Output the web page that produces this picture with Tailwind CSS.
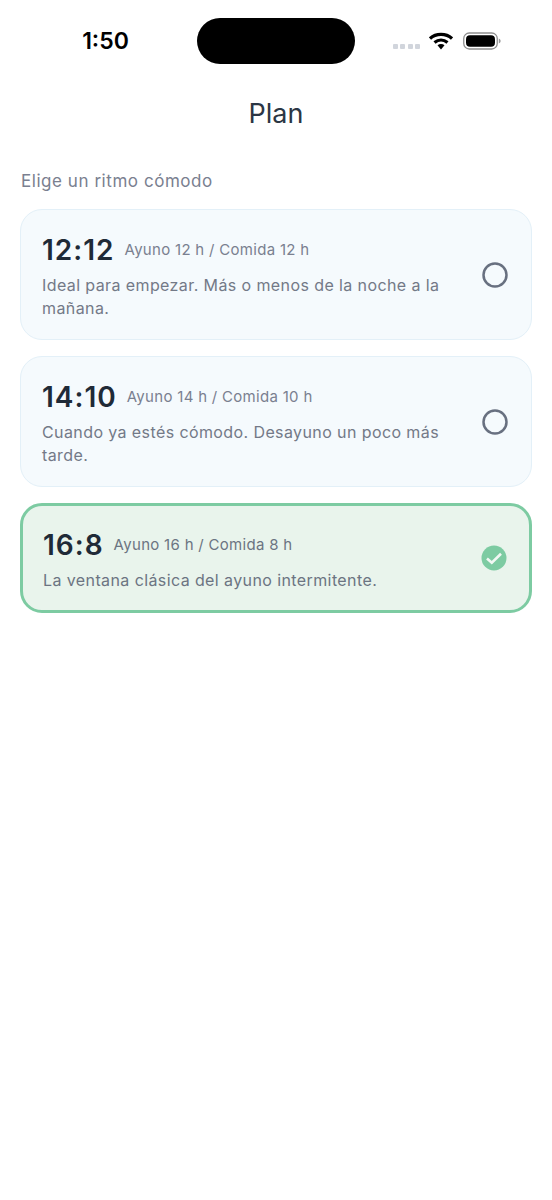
<!DOCTYPE html>
<html lang="es">
  <head>
    <meta charset="UTF-8" />
    <meta name="viewport" content="width=device-width, initial-scale=1.0" />
    <script src="https://cdn.jsdelivr.net/npm/@tailwindcss/browser@4"></script>
    <title>Plan</title>
  </head>
  <body class="bg-white font-['Inter',sans-serif]">
    <div class="w-[552px] h-[1200px] flex flex-col">
      <!-- status bar -->
      <div class="h-[82px] pt-[18px] px-[20px] flex items-start justify-between relative">
        <div class="w-[170px] h-[46px] flex items-center justify-center pl-[1px] text-[23px] font-semibold text-black">1:50</div>
        <div class="w-[158px] h-[46px] rounded-full bg-black absolute left-[197px] top-[18px]"></div>
        <div class="flex items-center h-[46px] mr-[31px] pb-[1px]">
          <div class="flex gap-[2.5px] mt-[11px] mr-[9px]">
            <span class="w-[5px] h-[5px] rounded-[1px] bg-gray-300"></span>
            <span class="w-[5px] h-[5px] rounded-[1px] bg-gray-300"></span>
            <span class="w-[5px] h-[5px] rounded-[1px] bg-gray-300"></span>
            <span class="w-[5px] h-[5px] rounded-[1px] bg-gray-300"></span>
          </div>
          <svg width="24" height="18" viewBox="0 0 24 18" class="mr-[10px]">
            <path d="M1 6.5C7 1 17 1 23 6.5" fill="none" stroke="#000" stroke-width="3.2" />
            <path d="M5.5 10.5C9.5 7.2 14.5 7.2 18.5 10.5" fill="none" stroke="#000" stroke-width="3.2" />
            <path d="M8.5 13.2C10.5 11.6 13.5 11.6 15.5 13.2L12 17.5Z" fill="#000" />
          </svg>
          <svg width="38" height="18" viewBox="0 0 38 18">
            <rect x="0.75" y="1" width="33.5" height="16" rx="5.5" fill="none" stroke="#8e8e8e" stroke-width="1.3" />
            <rect x="3" y="3.2" width="29" height="11.6" rx="4" fill="#000" />
            <path d="M35.8 6.5C37 7 37.6 8 37.6 9C37.6 10 37 11 35.8 11.5Z" fill="#9a9a9a" />
          </svg>
        </div>
      </div>

      <h1 class="h-[64px] flex items-center justify-center text-[27px] font-normal text-[#2b3644]">Plan</h1>

      <p class="mt-[22px] px-[21px] text-[17px] tracking-[0.55px] leading-[26px] text-[#7a8090]">Elige un ritmo cómodo</p>

      <div class="mt-[15px] px-[20px] flex flex-col gap-[16px]">
        <div class="h-[131px] rounded-[22px] border border-[#e3f0f8] bg-[#f5fafd] pl-[21px] pr-[23px] flex items-center justify-between">
          <div class="w-[410px] pt-[3px]">
            <div class="flex items-center gap-[10px]">
              <span class="text-[28px] tracking-[1px] leading-[36px] font-semibold text-[#1f2a37]">12:12</span>
              <span class="text-[15px] tracking-[0.3px] leading-[22px] text-[#7a8090] mb-[1px]">Ayuno 12 h / Comida 12 h</span>
            </div>
            <p class="mt-[6px] text-[16px] tracking-[0.4px] leading-[23px] text-[#737987]">Ideal para empezar. Más o menos de la noche a la mañana.</p>
          </div>
          <svg width="26" height="26" viewBox="0 0 26 26">
            <circle cx="13" cy="13" r="11.5" fill="none" stroke="#687080" stroke-width="2.5" />
          </svg>
        </div>

        <div class="h-[131px] rounded-[22px] border border-[#e3f0f8] bg-[#f5fafd] pl-[21px] pr-[23px] flex items-center justify-between">
          <div class="w-[410px] pt-[3px]">
            <div class="flex items-center gap-[10px]">
              <span class="text-[28px] tracking-[1px] leading-[36px] font-semibold text-[#1f2a37]">14:10</span>
              <span class="text-[15px] tracking-[0.3px] leading-[22px] text-[#7a8090] mb-[1px]">Ayuno 14 h / Comida 10 h</span>
            </div>
            <p class="mt-[6px] text-[16px] tracking-[0.4px] leading-[23px] text-[#737987]">Cuando ya estés cómodo. Desayuno un poco más tarde.</p>
          </div>
          <svg width="26" height="26" viewBox="0 0 26 26">
            <circle cx="13" cy="13" r="11.5" fill="none" stroke="#687080" stroke-width="2.5" />
          </svg>
        </div>

        <div class="h-[110px] rounded-[22px] border-[3px] border-[#7dcba2] bg-[#e9f4ec] pl-[20px] pr-[22px] flex items-center justify-between">
          <div class="w-[410px] pt-[3px]">
            <div class="flex items-center gap-[10px]">
              <span class="text-[28px] tracking-[1px] leading-[36px] font-semibold text-[#1f2a37]">16:8</span>
              <span class="text-[15px] tracking-[0.3px] leading-[22px] text-[#6c7482] mb-[1px]">Ayuno 16 h / Comida 8 h</span>
            </div>
            <p class="mt-[6px] text-[16px] tracking-[0.4px] leading-[23px] text-[#6c7482]">La ventana clásica del ayuno intermitente.</p>
          </div>
          <svg width="26" height="26" viewBox="0 0 26 26">
            <circle cx="13" cy="13" r="12.5" fill="#7dcba2" />
            <path d="M6 13.5L10.8 17.8L20 8.8" fill="none" stroke="#f2f8f4" stroke-width="2.6" />
          </svg>
        </div>
      </div>
    </div>
  </body>
</html>
